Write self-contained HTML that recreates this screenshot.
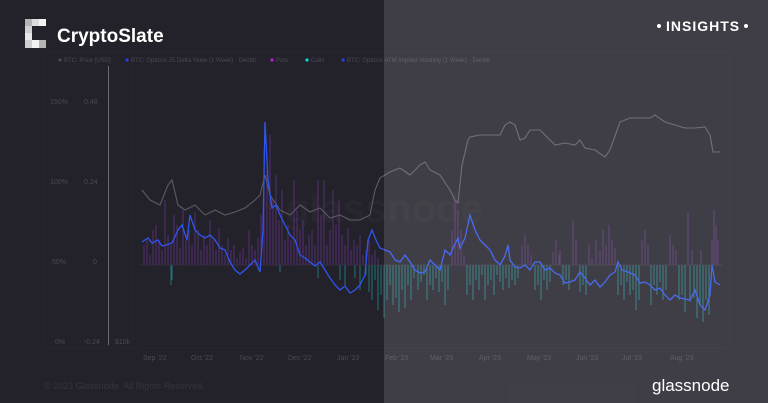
<!DOCTYPE html>
<html><head><meta charset="utf-8"><style>
html,body{margin:0;padding:0;width:768px;height:403px;overflow:hidden;background:#23222b;font-family:"Liberation Sans",sans-serif}
svg{display:block}
</style></head><body>
<svg width="768" height="403" viewBox="0 0 768 403" xmlns="http://www.w3.org/2000/svg" font-family="Liberation Sans, sans-serif">
<rect width="768" height="403" fill="#23222b"/>
<g stroke="#26252e" stroke-width="1" fill="none">
<rect x="44" y="52" width="686" height="296"/>
<line x1="80" y1="62" x2="80" y2="348"/>
<line x1="132" y1="62" x2="132" y2="348"/>
<line x1="140" y1="344" x2="722" y2="344"/>
</g>
<line x1="108.5" y1="66" x2="108.5" y2="345" stroke="#6a6972" stroke-width="1"/>
<g font-size="6" fill="#4a4953">
<circle cx="60" cy="60" r="1.6" fill="#4a4953"/><text x="64" y="62">BTC: Price [USD]</text>
<circle cx="127" cy="60" r="1.6" fill="#2a40e0"/><text x="131" y="62">BTC: Options 25 Delta Skew (1 Week) - Deribit</text>
<circle cx="272" cy="60" r="1.6" fill="#b020d0"/><text x="276" y="62">Puts</text>
<circle cx="307" cy="60" r="1.6" fill="#10d0d8"/><text x="311" y="62">Calls</text>
<circle cx="343" cy="60" r="1.6" fill="#2a40e0"/><text x="347" y="62">BTC: Options ATM Implied Volatility (1 Week) - Deribit</text>
</g>
<g font-size="7" fill="#4a4953">
<text x="50" y="104">150%</text><text x="84" y="104">0.48</text>
<text x="50" y="184">100%</text><text x="84" y="184">0.24</text>
<text x="52" y="264">50%</text><text x="93" y="264">0</text>
<text x="55" y="344">0%</text><text x="84" y="344">-0.24</text><text x="115" y="344">$10k</text>
<text x="143" y="360">Sep '22</text><text x="191" y="360">Oct '22</text><text x="240" y="360">Nov '22</text><text x="288" y="360">Dec '22</text><text x="337" y="360">Jan '23</text><text x="385" y="360">Feb '23</text><text x="430" y="360">Mar '23</text><text x="479" y="360">Apr '23</text><text x="527" y="360">May '23</text><text x="576" y="360">Jun '23</text><text x="622" y="360">Jul '23</text><text x="670" y="360">Aug '23</text>
</g>
<text x="285" y="222" font-size="40" font-weight="bold" fill="#28272f">glassnode</text>
<path stroke="#6a3590" stroke-width="1" opacity="0.7" fill="none" d="M144 265V245M147 265V240M150 265V255M153 265V230M156 265V225M159 265V240M162 265V250M165 265V200M168 265V235M171 265V245M174 265V215M177 265V225M180 265V248M183 265V210M186 265V240M189 265V230M192 265V245M195 265V212M198 265V230M201 265V250M204 265V235M207 265V245M210 265V220M213 265V240M216 265V250M219 265V228M222 265V245M225 265V255M228 265V238M231 265V250M234 265V245M237 265V258M240 265V252M243 265V248M246 265V258M249 265V230M252 265V245M255 265V250M258 265V238M261 265V215M264 265V150M267 265V170M270 265V135M273 265V200M276 265V175M279 265V220M282 265V190M285 265V240M288 265V225M291 265V240M294 265V180M297 265V210M300 265V230M303 265V220M306 265V245M309 265V235M312 265V230M315 265V245M318 265V180M321 265V215M324 265V180M327 265V245M330 265V230M333 265V190M336 265V225M339 265V200M342 265V235M345 265V245M348 265V228M351 265V250M354 265V240M357 265V245M360 265V235M363 265V255M366 265V250M369 265V240M372 265V255M375 265V250M378 265V258M452 265V230M455 265V200M458 265V210M461 265V230M464 265V255M522 265V245M525 265V235M528 265V245M531 265V255M553 265V252M556 265V240M559 265V255M560 265V250M573 265V220M576 265V240M589 265V245M592 265V258M596 265V240M600 265V250M603 265V230M606 265V245M609 265V225M612 265V240M615 265V248M642 265V240M645 265V230M648 265V245M670 265V235M673 265V245M676 265V250M688 265V212M692 265V250M701 265V250M712 265V240M714 265V210M716 265V225M718 265V240"/>
<path stroke="#1f8f96" stroke-width="1" opacity="0.75" fill="none" d="M171 265V285M172 265V280M280 265V272M318 265V278M340 265V280M345 265V285M355 265V278M360 265V290M366 265V275M369 265V292M372 265V300M375 265V280M378 265V310M381 265V295M384 265V318M387 265V300M390 265V285M393 265V305M396 265V298M399 265V312M402 265V290M405 265V308M408 265V285M411 265V300M414 265V278M418 265V290M421 265V282M424 265V275M427 265V300M430 265V285M433 265V290M436 265V278M439 265V292M442 265V282M445 265V305M448 265V290M467 265V295M470 265V285M473 265V300M476 265V280M479 265V290M482 265V275M485 265V300M488 265V285M491 265V280M494 265V295M497 265V275M500 265V282M503 265V290M506 265V278M509 265V288M512 265V280M515 265V285M518 265V278M535 265V290M538 265V285M541 265V300M544 265V280M547 265V290M550 265V282M563 265V285M566 265V280M569 265V290M580 265V292M583 265V285M586 265V295M618 265V295M621 265V285M624 265V300M627 265V282M630 265V295M633 265V290M636 265V310M639 265V300M651 265V305M654 265V285M657 265V295M660 265V282M663 265V300M666 265V290M679 265V300M682 265V295M685 265V312M690 265V302M694 265V298M697 265V318M700 265V305M703 265V322M706 265V300M709 265V315"/>
<line x1="140" y1="265" x2="722" y2="265" stroke="#3a3442" stroke-width="0.8"/>
<polyline fill="none" stroke="#5e5a64" stroke-width="1.1" points="142,190 150,200 160,205 168,185 172,180 178,205 185,210 195,205 205,215 215,210 225,215 235,212 245,208 255,200 260,195 265,175 270,195 280,210 290,215 300,205 310,212 320,208 330,218 340,215 350,220 360,220 370,215 375,190 380,178 390,172 400,168 410,175 420,165 425,162 430,170 440,175 450,190 455,200 458,203 462,165 468,140 470,137 480,135 490,135 500,135 505,125 510,122 515,125 520,140 525,138 530,130 540,130 545,135 555,145 565,143 575,145 580,140 585,148 595,150 605,157 610,150 620,122 630,118 640,118 650,118 655,115 665,122 675,125 685,128 695,128 705,127 710,135 713,152 720,152"/>
<polyline fill="none" stroke="#2f55f0" stroke-width="1.3" points="142,242 148,238 152,243 158,240 162,246 166,245 172,243 178,230 182,225 187,240 190,215 195,230 200,235 205,238 210,235 215,240 220,248 225,250 230,262 235,270 240,274 245,270 250,265 255,260 260,272 263,230 265,122 268,180 272,208 276,205 280,215 285,225 290,235 295,240 300,255 305,258 310,262 315,266 320,262 325,270 330,278 335,285 340,290 345,286 350,293 355,290 360,285 365,275 368,240 372,230 376,240 380,248 385,250 390,252 395,260 400,262 405,255 410,262 415,270 420,273 425,272 430,260 435,265 440,270 445,250 450,255 453,248 458,238 460,248 465,238 470,215 475,230 480,240 485,245 490,250 495,260 500,265 505,256 508,245 510,260 515,267 520,268 525,265 530,270 535,262 540,262 545,270 550,268 555,273 560,275 565,283 570,282 575,280 580,272 585,278 590,285 595,280 600,287 605,282 610,275 615,272 618,262 622,270 628,272 635,275 640,283 645,282 650,285 655,290 660,288 665,295 670,300 675,295 680,298 690,300 695,290 700,305 705,310 710,295 712,265 715,282 720,285"/>
<rect x="384" y="0" width="384" height="403" fill="#ffffff" fill-opacity="0.13"/>
<g>
<rect x="25" y="19" width="7" height="7" fill="#b5b5b5"/><rect x="32" y="19" width="7" height="7" fill="#dcdcdc"/><rect x="39" y="19" width="7" height="7" fill="#f2f2f2"/>
<rect x="25" y="26" width="7" height="7" fill="#d0d0d0"/>
<rect x="25" y="33" width="7" height="7" fill="#e8e8e8"/>
<rect x="25" y="40" width="7" height="8" fill="#cfcfcf"/><rect x="32" y="40" width="7" height="8" fill="#f2f2f2"/><rect x="39" y="40" width="7" height="8" fill="#b5b5b5"/>
</g>
<text x="57" y="42" font-size="19" font-weight="bold" fill="#ffffff">CryptoSlate</text>
<circle cx="659" cy="26" r="2" fill="#fff"/>
<text x="666" y="31" font-size="14" font-weight="bold" fill="#ffffff" letter-spacing="1">INSIGHTS</text>
<circle cx="746" cy="26" r="2" fill="#fff"/>
<text x="44" y="389" font-size="9" fill="#35343d">© 2023 Glassnode. All Rights Reserved.</text>
<text x="652" y="391" font-size="17" fill="#ffffff">glassnode</text>
</svg>
</body></html>
